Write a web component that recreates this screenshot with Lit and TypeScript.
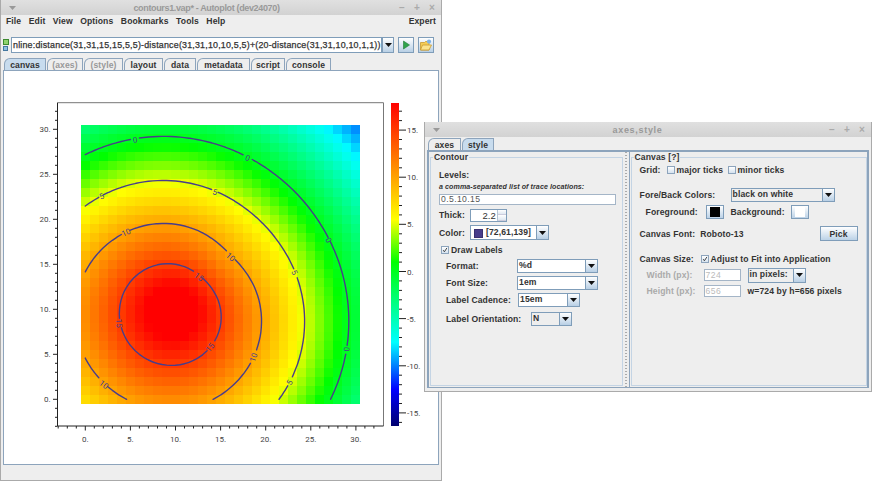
import { LitElement, html, css, svg } from "lit";
import { customElement } from "lit/decorators.js";

const px = (v: number) => 85.3 + 9.02 * v;
const py = (v: number) => 399.3 - 9.0 * v;
const dist = (x: number, y: number, c: number, r: number) => Math.hypot((x - c) / r, (y - c) / r);
const f = (x: number, y: number) => dist(x, y, 15, 5) - dist(x, y, 10, 5) + 20 - dist(x, y, 10, 1);

const stops: [number, number[]][] = [
  [18, [255, 0, 0]],
  [5.5, [255, 255, 0]],
  [1, [0, 255, 0]],
  [-7.5, [0, 255, 255]],
  [-12.5, [0, 0, 255]],
  [-16.4, [0, 0, 110]],
];
function color(v: number) {
  for (let i = 0; i < stops.length - 1; i++) {
    const [a, ca] = stops[i];
    const [b, cb] = stops[i + 1];
    if (v >= b) {
      const t = Math.min(1, (a - v) / (a - b));
      return `rgb(${ca.map((c, k) => Math.round(c + (cb[k] - c) * t)).join(",")})`;
    }
  }
  return "rgb(0,0,110)";
}

type Label = { v: number; x: number; y: number; r: number };
const labels: Label[] = [
  { v: 0, x: 135, y: 139.7, r: -8 },
  { v: 0, x: 247.7, y: 157.7, r: 22 },
  { v: 0, x: 328.7, y: 240, r: 62 },
  { v: 0, x: 346.7, y: 349.3, r: 95 },
  { v: 5, x: 101.7, y: 196, r: -24 },
  { v: 5, x: 215, y: 192, r: 14 },
  { v: 5, x: 294.7, y: 272.3, r: 66 },
  { v: 5, x: 289.3, y: 382.3, r: -62 },
  { v: 10, x: 126, y: 232.3, r: -24 },
  { v: 10, x: 230.7, y: 256.7, r: 42 },
  { v: 10, x: 253.3, y: 357.3, r: -72 },
  { v: 10, x: 104, y: 384.3, r: 38 },
  { v: 15, x: 199, y: 276.7, r: 38 },
  { v: 15, x: 119.3, y: 323.3, r: 86 },
  { v: 15, x: 210, y: 347.3, r: -52 },
];

function contour(level: number) {
  const own = labels.filter((l) => l.v === level);
  const gap = level === 0 || level === 5 ? 4 : 6;
  let d = "";
  const cross = (x1: number, y1: number, x2: number, y2: number) => {
    const a = f(x1, y1) - level;
    const b = f(x2, y2) - level;
    if (a >= 0 === b >= 0) return null;
    const t = a / (a - b);
    return [px(x1 + (x2 - x1) * t), py(y1 + (y2 - y1) * t)];
  };
  for (let i = 0; i < 60; i++) {
    for (let j = 0; j < 60; j++) {
      const x = i / 2;
      const y = j / 2;
      const pts = [
        cross(x, y, x + 0.5, y),
        cross(x + 0.5, y, x + 0.5, y + 0.5),
        cross(x + 0.5, y + 0.5, x, y + 0.5),
        cross(x, y + 0.5, x, y),
      ].filter(Boolean) as number[][];
      if (pts.length < 2) continue;
      const mx = (pts[0][0] + pts[1][0]) / 2;
      const my = (pts[0][1] + pts[1][1]) / 2;
      if (own.some((l) => Math.hypot(l.x - mx, l.y - my) < gap)) continue;
      d += `M${pts[0][0].toFixed(1)} ${pts[0][1].toFixed(1)}L${pts[1][0].toFixed(1)} ${pts[1][1].toFixed(1)}`;
    }
  }
  return d;
}

const range = (a: number, b: number) => Array.from({ length: b - a + 1 }, (_, i) => a + i);
const barY = (v: number) => 271.5 - 9.43 * v;

const arrow = html`<svg class="arr" viewBox="0 0 7 4"><path d="M0 0H7L3.5 4Z" fill="#111" /></svg>`;
const tick = html`<svg class="tickmark" viewBox="0 0 8 8"><path d="M1.6 4.2L3.2 6.4L6.6 1.2" fill="none" stroke="#333" stroke-width="1.2" /></svg>`;

function plot() {
  const cells = [];
  for (let i = 0; i <= 30; i++) {
    for (let j = 0; j <= 30; j++) {
      const x0 = Math.round(px(i - 0.5));
      const x1 = Math.round(px(i + 0.5));
      const y0 = Math.round(py(j + 0.5));
      const y1 = Math.round(py(j - 0.5));
      cells.push(svg`<rect x=${x0} y=${y0} width=${x1 - x0} height=${y1 - y0} fill=${color(f(i, j))} />`);
    }
  }
  const xt = range(-3, 32);
  const yt = range(-3, 32);
  const axisTicks =
    xt.map((v) => `M${px(v).toFixed(1)} 426v${v % 5 === 0 ? 4.5 : 2.5}`).join("") +
    yt.map((v) => `M57.5 ${py(v).toFixed(1)}h${v % 5 === 0 ? -4.5 : -2.5}`).join("");
  const bt = range(-16, 17);
  const barTicks = bt.map((v) => `M399 ${barY(v).toFixed(1)}h${v % 5 === 0 ? 7 : 3}`).join("");
  const majors = [0, 5, 10, 15, 20, 25, 30];
  return html`<svg class="plot" viewBox="4 71 434 394" role="img">
    <defs>
      <linearGradient id="wedge" x1="0" y1="103" x2="0" y2="426" gradientUnits="userSpaceOnUse">
        ${stops.map(
          ([v, c]) => svg`<stop offset=${(barY(v) - 103) / 323} stop-color=${`rgb(${c.join(",")})`} />`
        )}
      </linearGradient>
    </defs>
    <g shape-rendering="crispEdges">${cells}</g>
    <path d="M57.5 102.7H383.5V426" fill="none" stroke="#777" stroke-width="1" />
    <path d="M57.5 102.7V426H383.5" fill="none" stroke="#222" stroke-width="1" />
    <path d=${axisTicks} stroke="#222" stroke-width="1" fill="none" />
    ${[0, 5, 10, 15].map(
      (v) => svg`<path d=${contour(v)} stroke="#483d8b" stroke-width="1.4" stroke-linecap="round" fill="none" />`
    )}
    ${labels.map(
      (l) =>
        svg`<text class="clabel" transform=${`translate(${l.x} ${l.y}) rotate(${l.r})`} text-anchor="middle" dy="3">${l.v}</text>`
    )}
    ${majors.map((v) => svg`<text class="tl" x=${px(v)} y="442" text-anchor="middle">${v}.</text>`)}
    ${majors.map((v) => svg`<text class="tl" x="50.5" y=${py(v) + 3} text-anchor="end">${v}.</text>`)}
    <rect x="391" y="103" width="8" height="323" fill="url(#wedge)" />
    <path d=${barTicks} stroke="#222" stroke-width="1" fill="none" />
    ${[15, 10, 5, 0, -5, -10, -15].map(
      (v) => svg`<text class="tl" x="407" y=${barY(v) + 3}>${v}.</text>`
    )}
  </svg>`;
}

@customElement("app-root")
export class AppRoot extends LitElement {
  static styles = css`
    :host {
      display: block;
      position: relative;
      width: 872px;
      height: 482px;
      overflow: hidden;
      background: #fff;
      font: bold 8.6px "Liberation Sans", sans-serif;
      letter-spacing: 0.1px;
      color: #333;
    }
    * { box-sizing: border-box; }
    .win {
      position: absolute;
      display: flex;
      flex-direction: column;
      background: #eee;
      border: 1px solid #aaa;
      border-top: 0;
    }
    .main { left: 0; top: 0; width: 442px; height: 481px; }
    .tool { left: 424px; top: 122px; width: 448px; height: 270px; }
    .title {
      flex: none;
      height: 15px;
      display: flex;
      align-items: center;
      padding: 0 6px 0 8px;
      background: linear-gradient(#e0e0e0, #d2d2d2);
      color: #999;
      font-size: 9px;
    }
    .title .t { flex: 1; text-align: center; }
    .main .t { letter-spacing: -0.35px; padding-right: 2px; }
    .tool .t { letter-spacing: 0.7px; padding-left: 6px; }
    .grip { width: 7px; height: 4px; flex: none; }
    .ctl { display: flex; font-size: 10px; color: #aaa; width: 36px; justify-content: space-between; }
    .menu {
      flex: none;
      height: 12px;
      display: flex;
      align-items: center;
      padding: 0 5px 0 5px;
      gap: 7.5px;
    }
    .menu .sp { flex: 1; }
    .uri {
      flex: none;
      margin-top: 10px;
      height: 16px;
      display: flex;
      align-items: center;
      padding-left: 2px;
    }
    .dots { width: 6px; display: flex; flex-direction: column; gap: 1px; margin-right: 2px; }
    .d1 { width: 6px; height: 6px; border: 1px solid #3d8a2f; background: #8fd36d; }
    .d2 { width: 5px; height: 5px; border: 1px solid #44779f; background: #8fc0e4; }
    .uinput {
      width: 371px;
      height: 16px;
      background: #fff;
      border: 1px solid #7f9db9;
      padding: 0 0 0 1px;
      line-height: 14px;
      overflow: hidden;
      white-space: nowrap;
      font-weight: normal;
      -webkit-text-stroke: 0.25px #333;
      letter-spacing: 0.2px;
      font-size: 8.9px;
    }
    .ubtn {
      flex: none;
      width: 12px;
      height: 16px;
      border: 1px solid #7f9db9;
      background: linear-gradient(#fff, #b8cfe5);
      display: flex;
      align-items: center;
      justify-content: center;
    }
    .ibtn { width: 16px; height: 16px; margin-left: 4px; }
    .ibtn svg { width: 12px; height: 12px; }
    .arr { width: 7px; height: 4px; }
    .tabs {
      flex: none;
      display: flex;
      height: 12px;
      margin-top: 5px;
      padding-left: 3px;
      gap: 1px;
    }
    .tool .tabs { margin-top: 1px; padding-left: 3px; }
    .tab {
      border: 1px solid #8da4bc;
      border-bottom: 0;
      border-top-left-radius: 6px;
      display: flex;
      align-items: center;
      justify-content: center;
      background: #eee;
    }
    .tab.on { background: #c8dcee; }
    .tab.off { color: #999; }
    .w42 { width: 42px; } .w37 { width: 36px; } .w39 { width: 39px; } .w40 { width: 39px; }
    .w33 { width: 32px; } .w54 { width: 53px; } .w35 { width: 34px; } .w46 { width: 45px; }
    .w38 { width: 33px; } .w30 { width: 32px; }
    .tbody {
      flex: none;
      height: 395px;
      margin: 0 2px;
      border: 1px solid #8da4bc;
      background: #fff;
      display: flex;
    }
    .plot { display: block; width: 434px; height: 394px; }
    .tl { font: 8px Roboto, sans-serif; fill: #444; letter-spacing: 0; }
    .clabel { font: 8px Roboto, sans-serif; fill: #483d8b; letter-spacing: 0; }
    .status { flex: 1; }
    .tbody2 {
      flex: none;
      height: 238px;
      margin: 0 2px;
      border: 1px solid #8da4bc;
      border-width: 2px 2px 1px 2px;
      display: flex;
      background: #eee;
    }
    .group {
      position: relative;
      border: 1px solid #c4d4e4;
      margin-top: 5px;
    }
    .g1 { width: 193px; margin-left: 1px; padding: 10px 0 0 8px; height: 229px; }
    .g2 { width: 237px; margin-left: 1px; padding: 5px 0 0 8px; height: 229px; }
    .legend {
      position: absolute;
      left: 2px;
      top: -6px;
      height: 11px;
      line-height: 11px;
      padding: 0 1px;
      background: #eee;
    }
    .split {
      flex: none;
      width: 5px;
      margin-left: 2px;
      background: repeating-linear-gradient(#aaa 0 1px, transparent 1px 3px) 0 0 / 2px 100% no-repeat;
      border-right: 1px solid #8da4bc;
    }
    .row { display: flex; align-items: center; }
    .lab { flex: none; }
    .hint { font-size: 7.1px; font-style: italic; letter-spacing: 0.08px; }
    .field {
      background: #fff;
      border: 1px solid #a4b5c7;
      font-weight: normal;
      color: #555;
      height: 12px;
      line-height: 10px;
      padding-left: 1px;
      letter-spacing: 0.4px;
    }
    .combo { display: flex; height: 14px; border: 1px solid #7f9db9; background: #fff; align-items: stretch; }
    .combo .v { flex: 1; padding-left: 1px; line-height: 11px; }
    .combo .b {
      flex: none;
      width: 12px;
      background: linear-gradient(#fff, #b8cfe5);
      border-left: 1px solid #7f9db9;
      display: flex;
      align-items: center;
      justify-content: center;
    }
    .grey { background: #eee; }
    .check {
      flex: none;
      width: 8px;
      height: 8px;
      border: 1px solid #8da4bc;
      background: linear-gradient(#fff, #d5e2ef);
      display: block;
    }
    .tickmark { display: block; width: 100%; height: 100%; }
    .swatch { width: 9px; height: 9px; background: #483d8b; margin: 1px 3px 0 2px; border: 1px solid #3a3070; flex: none; }
    .spin { display: flex; width: 37px; height: 13px; border: 1px solid #7f9db9; background: #fff; margin-left: 7px; }
    .spin .n { flex: 1; text-align: right; line-height: 11px; padding-right: 1px; font-size: 9.5px; font-weight: normal; }
    .spin .ud { width: 9px; border-left: 1px solid #b5c5d5; display: flex; flex-direction: column; }
    .spin .ud i { flex: 1; background: linear-gradient(#fff, #dfe8f1); border-bottom: 1px solid #ccd; }
    .btn {
      border: 1px solid #7f9db9;
      background: linear-gradient(#fff, #bcd2e7);
      display: flex;
      align-items: center;
      justify-content: center;
    }
    .cbtn { width: 18px; height: 14px; }
    .cbtn i { display: block; width: 10px; height: 10px; }
    .black { background: #000; }
    .white { background: #fff; }
    .muted { color: #aaa; }
    .r1 { height: 14px; } .r2 { height: 10px; } .r3 { height: 15px; } .r4 { height: 16px; }
    .r5 { height: 19px; } .r6 { height: 15px; } .r7 { height: 17px; } .r8 { height: 18px; } .r9 { height: 19px; }
    .ind { padding-left: 7px; }
    .l-thick { width: 24px; }
    .l-color { width: 31px; }
    .l-fmt { width: 71px; }
    .l-cad { width: 72px; }
    .l-ori { width: 85px; }
    .f-lev { width: 177px; height: 11px; line-height: 9px; }
    .c-color { width: 79px; height: 15px; }
    .c-fmt { width: 81px; }
    .c-cad { width: 62px; }
    .c-ori { width: 41px; }
    .c-fb { width: 104px; }
    .c-pix { width: 58px; height: 15px; }
    .ml2 { padding-left: 2px; }
    .r-grid { height: 14px; }
    .r-fb { height: 14px; margin-top: 11px; }
    .r-fg { height: 17px; margin-top: 1px; padding-left: 6px; }
    .r-font { height: 17px; margin-top: 5px; }
    .r-size { height: 14px; margin-top: 10px; }
    .r-w { height: 16px; margin-top: 1px; padding-left: 7px; }
    .r-h { height: 14px; margin-top: 1px; padding-left: 7px; }
    .l-grid { width: 27px; }
    .gapx { margin-left: 2px; }
    .l-major { width: 51px; padding-left: 2px; }
    .l-fb { width: 91px; }
    .l-fg { width: 60px; }
    .l-bg { width: 67px; padding-left: 7px; }
    .l-cf { width: 180px; }
    .pick { width: 38px; height: 15px; }
    .l-size { width: 61px; }
    .l-wh { width: 57px; }
    .f-wh { width: 37px; color: #bbb; }
    .sp7 { margin-left: 7px; }
    .cbx { margin-right: 2px; }
  `;

  private tabs(items: [string, string][]) {
    return items.map(([n, c]) => html`<div class="tab ${c}">${n}</div>`);
  }

  render() {
    return html`
      <div class="win main">
        <div class="title">
          <svg class="grip" viewBox="0 0 7 4"><path d="M0 0H7L3.5 4Z" fill="#999" /></svg>
          <div class="t">contours1.vap* - Autoplot (dev24070)</div>
          <div class="ctl"><span>–</span><span>+</span><span>×</span></div>
        </div>
        <div class="menu">
          <span>File</span><span>Edit</span><span>View</span><span>Options</span><span>Bookmarks</span>
          <span>Tools</span><span>Help</span><span class="sp"></span><span>Expert</span>
        </div>
        <div class="uri">
          <div class="dots"><div class="d1"></div><div class="d2"></div></div>
          <div class="uinput">nline:distance(31,31,15,15,5,5)-distance(31,31,10,10,5,5)+(20-distance(31,31,10,10,1,1))</div>
          <div class="ubtn">${arrow}</div>
          <div class="ubtn ibtn">
            <svg viewBox="0 0 12 12"><path d="M3.5 2L9.5 6L3.5 10Z" fill="#2fa34c" stroke="#1d7a36" stroke-width=".6" /></svg>
          </div>
          <div class="ubtn ibtn">
            <svg viewBox="0 0 12 12">
              <path d="M.5 3.5H4.5L5.5 2.5H9V11H.5Z" fill="#f5cc55" stroke="#c99a30" stroke-width=".8" />
              <path d="M.5 11L2.5 6H11.5L9 11Z" fill="#fbe38e" stroke="#c99a30" stroke-width=".8" />
              <circle cx="9" cy="2.6" r="2.1" fill="#7fb3e6" />
            </svg>
          </div>
        </div>
        <div class="tabs">
          ${this.tabs([
            ["canvas", "on w42"],
            ["(axes)", "off w37"],
            ["(style)", "off w39"],
            ["layout", "w40"],
            ["data", "w33"],
            ["metadata", "w54"],
            ["script", "w35"],
            ["console", "w46"],
          ])}
        </div>
        <div class="tbody">${plot()}</div>
        <div class="status"></div>
      </div>

      <div class="win tool">
        <div class="title">
          <svg class="grip" viewBox="0 0 7 4"><path d="M0 0H7L3.5 4Z" fill="#999" /></svg>
          <div class="t">axes,style</div>
          <div class="ctl"><span>–</span><span>+</span><span>×</span></div>
        </div>
        <div class="tabs">${this.tabs([["axes", "w38"], ["style", "on w30"]])}</div>
        <div class="tbody2">
          <div class="group g1">
            <div class="legend">Contour</div>
            <div class="row r1">Levels:</div>
            <div class="row r2 hint">a comma-separated list of trace locations:</div>
            <div class="row r3"><div class="field f-lev">0.5.10.15</div></div>
            <div class="row r4">
              <span class="lab l-thick">Thick:</span>
              <div class="spin"><div class="n">2.2</div><div class="ud"><i></i><i></i></div></div>
            </div>
            <div class="row r5">
              <span class="lab l-color">Color:</span>
              <div class="combo c-color">
                <div class="v row"><div class="swatch"></div>[72,61,139]</div>
                <div class="b">${arrow}</div>
              </div>
            </div>
            <div class="row r6 ml2">
              <span class="check cbx">${tick}</span>Draw Labels
            </div>
            <div class="row r7 ind">
              <span class="lab l-fmt">Format:</span>
              <div class="combo c-fmt"><div class="v">%d</div><div class="b">${arrow}</div></div>
            </div>
            <div class="row r7 ind">
              <span class="lab l-fmt">Font Size:</span>
              <div class="combo c-fmt"><div class="v">1em</div><div class="b">${arrow}</div></div>
            </div>
            <div class="row r8 ind">
              <span class="lab l-cad">Label Cadence:</span>
              <div class="combo c-cad"><div class="v">15em</div><div class="b">${arrow}</div></div>
            </div>
            <div class="row r9 ind">
              <span class="lab l-ori">Label Orientation:</span>
              <div class="combo c-ori grey"><div class="v">N</div><div class="b">${arrow}</div></div>
            </div>
          </div>
          <div class="split"></div>
          <div class="group g2">
            <div class="legend">Canvas [?]</div>
            <div class="row r-grid">
              <span class="lab l-grid">Grid:</span>
              <span class="check"></span><span class="lab l-major">major ticks</span>
              <span class="check gapx"></span><span class="lab l-major">minor ticks</span>
            </div>
            <div class="row r-fb">
              <span class="lab l-fb">Fore/Back Colors:</span>
              <div class="combo c-fb grey"><div class="v">black on white</div><div class="b">${arrow}</div></div>
            </div>
            <div class="row r-fg">
              <span class="lab l-fg">Foreground:</span>
              <div class="btn cbtn"><i class="black"></i></div>
              <span class="lab l-bg">Background:</span>
              <div class="btn cbtn"><i class="white"></i></div>
            </div>
            <div class="row r-font">
              <span class="lab l-cf">Canvas Font:&nbsp; Roboto-13</span>
              <div class="btn pick">Pick</div>
            </div>
            <div class="row r-size">
              <span class="lab l-size">Canvas Size:</span>
              <span class="check cbx">${tick}</span>Adjust to Fit into Application
            </div>
            <div class="row r-w">
              <span class="lab l-wh muted">Width (px):</span>
              <div class="field f-wh">724</div>
              <div class="combo c-pix grey sp7"><div class="v">in pixels:</div><div class="b">${arrow}</div></div>
            </div>
            <div class="row r-h">
              <span class="lab l-wh muted">Height (px):</span>
              <div class="field f-wh">656</div>
              <span class="sp7">w=724 by h=656 pixels</span>
            </div>
          </div>
        </div>
      </div>
    `;
  }
}
